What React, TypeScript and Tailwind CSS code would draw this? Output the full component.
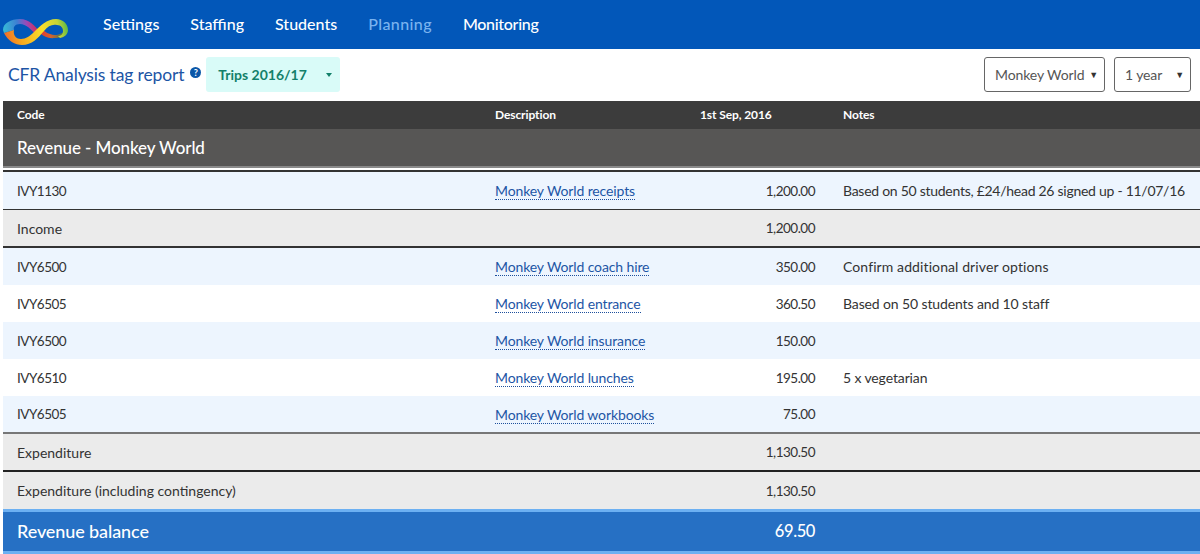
const navItems = ['Settings', 'Staffing', 'Students', 'Planning', 'Monitoring'];

const cols = 'grid grid-cols-[478px_205px_143px_1fr]';

function Row({
  code,
  desc,
  value,
  notes,
  notesClass = '',
  className,
}: {
  code: string;
  desc?: string;
  value: string;
  notes?: string;
  notesClass?: string;
  className: string;
}) {
  const isCode = code.startsWith('IVY');
  return (
    <div className={`${cols} items-center text-[14px] tracking-[-0.12px] text-[#333] ${className}`}>
      <div className={isCode ? 'pl-[14px] pt-px text-[13.5px] tracking-[-0.5px]' : 'pl-[14px] tracking-[0px]'}>{code}</div>
      <div className="pl-[14px]">
        {desc && (
          <a className="border-b border-dotted border-[#1d4f9c] text-[#1d55a5]">{desc}</a>
        )}
      </div>
      <div className="pr-[14px] pt-px text-right text-[13.5px] tracking-[-0.5px]">{value}</div>
      <div className={`pl-[14px] whitespace-nowrap ${notesClass}`}>{notes}</div>
    </div>
  );
}

function Logo() {
  return (
    <svg width="70" height="42" viewBox="0 0 70 42" className="mb-[1px] shrink-0 self-end">
      <defs>
        <linearGradient id="leftBand" gradientUnits="userSpaceOnUse" x1="3" y1="24" x2="40" y2="20">
          <stop offset="0" stopColor="#35bcd6" />
          <stop offset="0.4" stopColor="#3f7fd2" />
          <stop offset="0.65" stopColor="#9c48b8" />
          <stop offset="1" stopColor="#e2263c" />
        </linearGradient>
        <linearGradient id="yellowBand" gradientUnits="userSpaceOnUse" x1="4" y1="32" x2="68" y2="20">
          <stop offset="0" stopColor="#ef6a2c" />
          <stop offset="0.25" stopColor="#f7a81e" />
          <stop offset="0.6" stopColor="#f9de2b" />
          <stop offset="0.85" stopColor="#c4d437" />
          <stop offset="1" stopColor="#56b848" />
        </linearGradient>
        <linearGradient id="lowerBand" gradientUnits="userSpaceOnUse" x1="37" y1="24" x2="66" y2="30">
          <stop offset="0" stopColor="#e2263c" />
          <stop offset="0.5" stopColor="#d8622c" />
          <stop offset="1" stopColor="#14845c" />
        </linearGradient>
      </defs>
      <path
        d="M3,24 C3,17 11,13 20,13 C29,13 35,20 40,26 L36,29 C31,23 26,18 20,18 C15,18 13,21 14,24 L4,27 Z"
        fill="url(#leftBand)"
      />
      <path
        d="M37,24 C41,29 47,33 55,32 C60,32 64,30 66,27 L62,27 C59,29 54,30 50,28 C46,27 43,24 40,21 Z"
        fill="url(#lowerBand)"
      />
      <path
        d="M4,27 C8,35 15,39 22,39 C32,39 38,32 44,25 C48,20 52,18 57,19 C61,19 63,22 63,25 C63,28 61,30 58,30 L60,32 C65,31 68,28 68,24 C68,18 63,13 56,13 C47,13 40,20 34,26 C30,30 26,33 21,33 C15,33 13,28 14,24 Z"
        fill="url(#yellowBand)"
      />
    </svg>
  );
}

export default function App() {
  return (
    <div className="h-[554px] w-[1200px] overflow-hidden bg-white font-['Lato',sans-serif] text-[#333]">
      <nav className="flex h-[49px] items-center bg-[#0257b9]">
        <Logo />
        <ul className="ml-[33px] flex gap-[31px] pb-[2px] text-[16px] font-medium">
          {navItems.map((item) => (
            <li
              key={item}
              className={
                item === 'Planning'
                  ? 'text-[#7ab3ef] tracking-[0.4px]'
                  : item === 'Monitoring'
                    ? 'text-white tracking-[-0.3px]'
                    : 'text-white'
              }
            >
              {item}
            </li>
          ))}
        </ul>
      </nav>

      <div className="flex h-[52px] items-start pl-2 pr-[9px] pt-2">
        <h1 className="mt-[5px] text-[17.5px] tracking-[-0.15px] text-[#1d55a5]">CFR Analysis tag report</h1>
        <span className="ml-[6px] mt-[10px] flex h-[11px] w-[11px] items-center justify-center rounded-full bg-[#0b57a8] text-[9px] font-bold text-white">
          ?
        </span>
        <div className="ml-[5px] flex h-[35px] w-[134px] items-center justify-between rounded-[3px] bg-[#d9fbf8] pl-3 pr-2 text-[14px] font-bold text-[#13806a]">
          Trips 2016/17
          <span className="h-0 w-0 border-x-[3.5px] border-t-4 border-x-transparent border-t-[#13806a]" />
        </div>
        <div className="ml-auto flex gap-[9px] text-[14px] tracking-[-0.1px] text-[#555]">
          <div className="flex h-[35px] w-[121px] items-center justify-between rounded-[3px] border border-[#666] pl-[10px] pr-[6px]">
            Monkey World
            <span className="text-[9px] text-[#333]">▼</span>
          </div>
          <div className="flex h-[35px] w-[77px] items-center justify-between rounded-[3px] border border-[#666] pl-[10px] pr-[6px]">
            1 year
            <span className="text-[9px] text-[#333]">▼</span>
          </div>
        </div>
      </div>

      <div className="ml-[3px]">
        <div className={`${cols} h-[28px] items-center bg-[#3c3c3c] text-[12px] font-bold tracking-[-0.1px] text-white`}>
          <div className="pl-[14px]">Code</div>
          <div className="pl-[14px]">Description</div>
          <div className="pl-[14px]">1st Sep, 2016</div>
          <div className="pl-[14px]">Notes</div>
        </div>
        <div className="flex h-[37px] items-center bg-[#575655] pl-[14px] text-[17px] font-medium tracking-[-0.1px] text-white">
          Revenue - Monkey World
        </div>
        <div className="h-[6px] border-y-2 border-t-[#8a8a8a] border-b-[#333] bg-white" />

        <Row
          className="h-[38px] border-b border-[#333] bg-[#edf5fe]"
          code="IVY1130"
          desc="Monkey World receipts"
          value="1,200.00"
          notes="Based on 50 students, £24/head 26 signed up - 11/07/16"
          notesClass="tracking-[-0.27px]"
        />
        <Row className="h-[38px] border-b-2 border-[#333] bg-[#ebebeb]" code="Income" value="1,200.00" />
        <Row
          className="h-[37px] bg-[#edf5fe]"
          code="IVY6500"
          desc="Monkey World coach hire"
          value="350.00"
          notes="Confirm additional driver options"
          notesClass="tracking-[0.1px]"
        />
        <Row
          className="h-[37px] bg-white"
          code="IVY6505"
          desc="Monkey World entrance"
          value="360.50"
          notes="Based on 50 students and 10 staff"
        />
        <Row className="h-[37px] bg-[#edf5fe]" code="IVY6500" desc="Monkey World insurance" value="150.00" />
        <Row
          className="h-[37px] bg-white"
          code="IVY6510"
          desc="Monkey World lunches"
          value="195.00"
          notes="5 x vegetarian"
        />
        <Row
          className="h-[38px] border-b-2 border-[#777] bg-[#edf5fe]"
          code="IVY6505"
          desc="Monkey World workbooks"
          value="75.00"
        />
        <Row className="h-[38px] border-b-2 border-[#222] bg-[#ebebeb]" code="Expenditure" value="1,130.50" />
        <Row className="h-[37px] bg-[#ebebeb]" code="Expenditure (including contingency)" value="1,130.50" />
        <div className={`${cols} h-[45px] items-center border-y-[3px] border-y-[#6cb0f2] bg-[#2670c4] text-[18px] font-medium tracking-[-0.1px] text-white`}>
          <div className="pl-[14px]">Revenue balance</div>
          <div />
          <div className="pr-[14px] text-right text-[16.5px] tracking-[-0.4px]">69.50</div>
          <div />
        </div>
      </div>
    </div>
  );
}
